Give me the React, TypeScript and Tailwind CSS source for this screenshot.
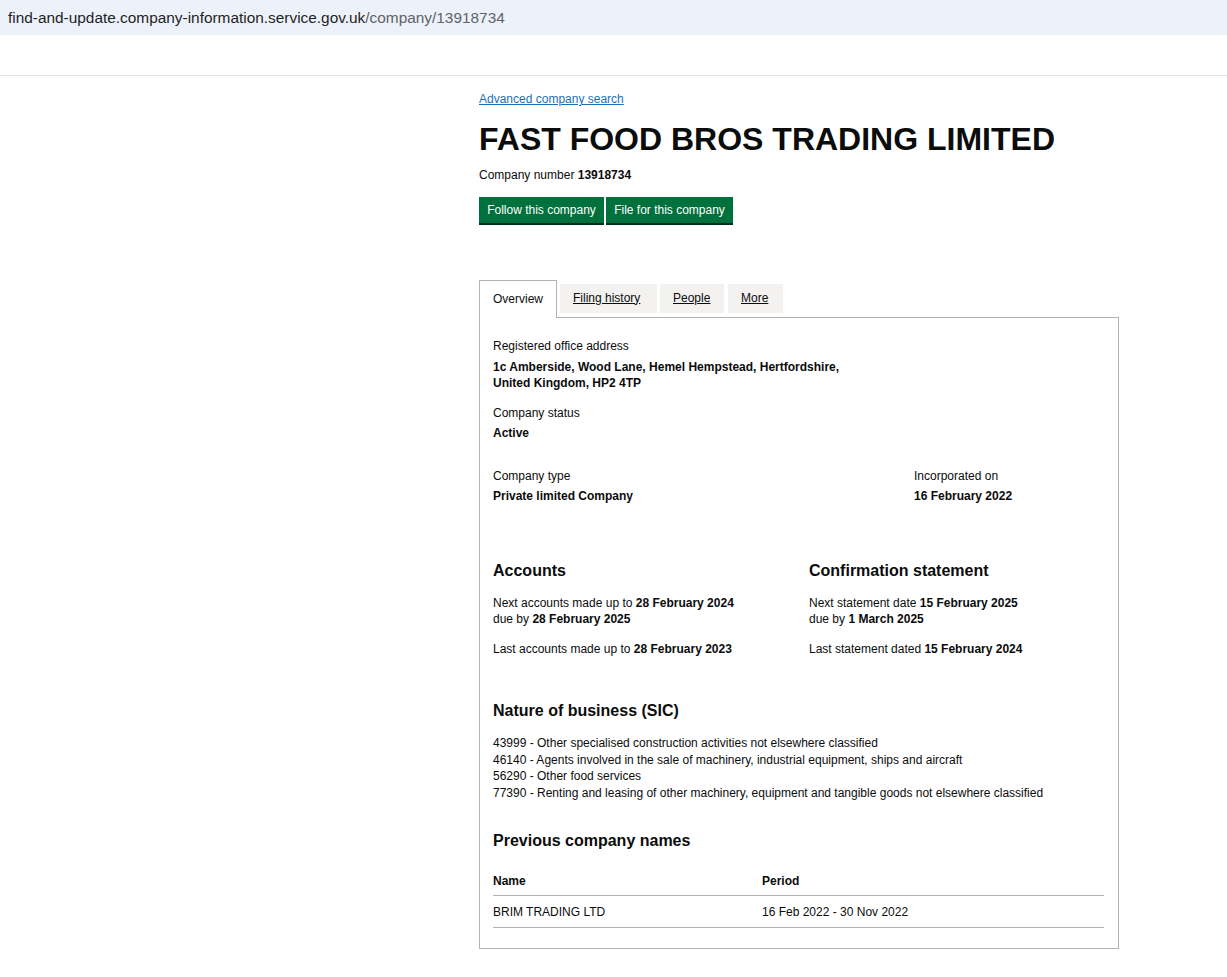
import React from 'react';

const sicCodes = [
  '43999 - Other specialised construction activities not elsewhere classified',
  '46140 - Agents involved in the sale of machinery, industrial equipment, ships and aircraft',
  '56290 - Other food services',
  '77390 - Renting and leasing of other machinery, equipment and tangible goods not elsewhere classified',
];

const App: React.FC = () => {
  return (
    <div className="min-h-[977px] bg-white text-[#0b0c0c] font-['Liberation_Sans',Arial,sans-serif]">
      {/* Address bar */}
      <div className="h-[35px] bg-[#edf2fa] flex items-center px-[8px] text-[15.4px]">
        <span className="text-[#1f1f1f]">find-and-update.company-information.service.gov.uk</span>
        <span className="text-[#5f6368]">/company/13918734</span>
      </div>
      <div className="h-[41px] border-b border-[#e3e3e3]" />

      <main className="ml-[479px] w-[640px]">
        <a href="#" className="block mt-[15px] text-[12px] leading-[16px] text-[#1d70b8] underline">
          Advanced company search
        </a>
        <h1 className="mt-[14px] text-[32px] leading-[36px] font-bold">FAST FOOD BROS TRADING LIMITED</h1>
        <p className="mt-[10px] text-[12px] leading-[16px]">
          Company number <strong>13918734</strong>
        </p>

        <div className="mt-[14px] flex gap-[2px]">
          <button className="w-[125px] h-[26px] bg-[#00703c] text-white text-[12px] shadow-[0_2px_0_#002d18]">
            Follow this company
          </button>
          <button className="w-[127px] h-[26px] bg-[#00703c] text-white text-[12px] shadow-[0_2px_0_#002d18]">
            File for this company
          </button>
        </div>

        {/* Tabs */}
        <div className="mt-[57px] flex items-start">
          <div className="relative z-10 h-[38px] w-[78px] bg-white border border-b-0 border-[#b1b4b6] flex items-center px-[13px] pb-[2px] text-[12px]">
            Overview
          </div>
          <a href="#" className="mt-[4px] ml-[3px] h-[29px] w-[97px] bg-[#f3f2f1] flex items-center px-[13px] pb-[2px] text-[12px] underline">
            Filing history
          </a>
          <a href="#" className="mt-[4px] ml-[3px] h-[29px] w-[64px] bg-[#f3f2f1] flex items-center px-[13px] pb-[2px] text-[12px] underline">
            People
          </a>
          <a href="#" className="mt-[4px] ml-[4px] h-[29px] w-[55px] bg-[#f3f2f1] flex items-center px-[13px] pb-[2px] text-[12px] underline">
            More
          </a>
        </div>

        {/* Panel */}
        <div className="-mt-px border border-[#b1b4b6] px-[13px] pt-[20px] pb-[20px] text-[12px] leading-[16px]">
          <div>Registered office address</div>
          <div className="mt-[5px] font-bold">
            1c Amberside, Wood Lane, Hemel Hempstead, Hertfordshire,
            <br />
            United Kingdom, HP2 4TP
          </div>

          <div className="mt-[14px]">Company status</div>
          <div className="mt-[4px] font-bold">Active</div>

          <div className="mt-[27px] grid grid-cols-[421px_1fr]">
            <div>
              <div>Company type</div>
              <div className="mt-[4px] font-bold">Private limited Company</div>
            </div>
            <div>
              <div>Incorporated on</div>
              <div className="mt-[4px] font-bold">16 February 2022</div>
            </div>
          </div>

          <div className="mt-[57px] grid grid-cols-[316px_1fr]">
            <div>
              <h2 className="text-[16px] leading-[20px] font-bold">Accounts</h2>
              <p className="mt-[14px]">
                Next accounts made up to <strong>28 February 2024</strong>
                <br />
                due by <strong>28 February 2025</strong>
              </p>
              <p className="mt-[14px]">
                Last accounts made up to <strong>28 February 2023</strong>
              </p>
            </div>
            <div>
              <h2 className="text-[16px] leading-[20px] font-bold">Confirmation statement</h2>
              <p className="mt-[14px]">
                Next statement date <strong>15 February 2025</strong>
                <br />
                due by <strong>1 March 2025</strong>
              </p>
              <p className="mt-[14px]">
                Last statement dated <strong>15 February 2024</strong>
              </p>
            </div>
          </div>

          <h2 className="mt-[44px] text-[16px] leading-[20px] font-bold">Nature of business (SIC)</h2>
          <ul className="mt-[14px] leading-[16.7px]">
            {sicCodes.map((code) => (
              <li key={code}>{code}</li>
            ))}
          </ul>

          <h2 className="mt-[29px] text-[16px] leading-[20px] font-bold">Previous company names</h2>
          <table className="mt-[22px] w-[611px] border-collapse text-left">
            <thead>
              <tr className="border-b border-[#b1b4b6]">
                <th className="w-[269px] pb-[6px] font-bold">Name</th>
                <th className="pb-[6px] font-bold">Period</th>
              </tr>
            </thead>
            <tbody>
              <tr className="border-b border-[#b1b4b6]">
                <td className="pt-[8px] pb-[7px]">BRIM TRADING LTD</td>
                <td className="pt-[8px] pb-[7px]">16 Feb 2022 - 30 Nov 2022</td>
              </tr>
            </tbody>
          </table>
        </div>
      </main>
    </div>
  );
};

export default App;
